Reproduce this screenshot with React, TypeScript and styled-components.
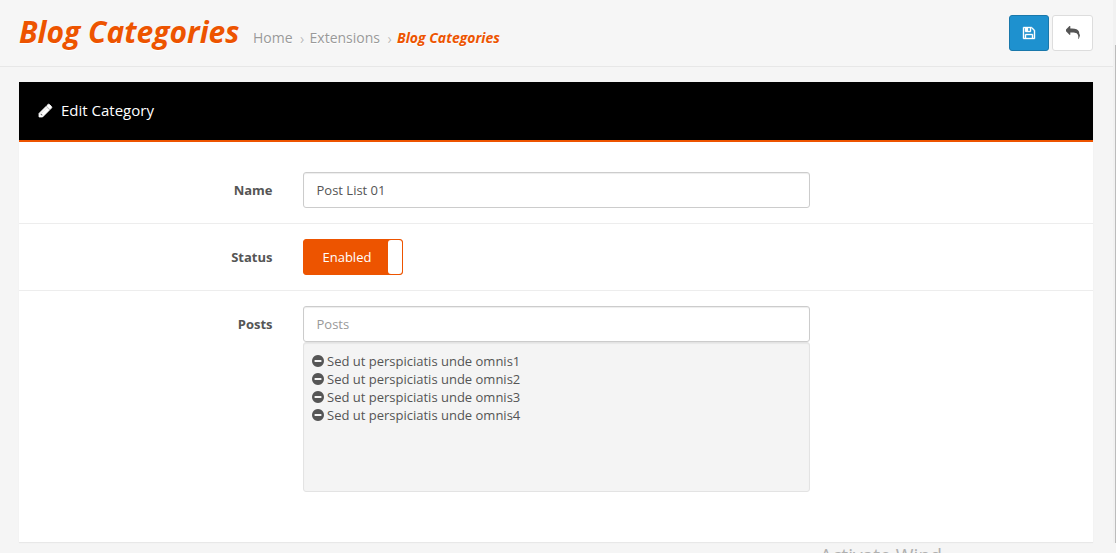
import React from "react";
import styled, { createGlobalStyle, css } from "styled-components";

const ORANGE = "#ed5400";

const GlobalStyle = createGlobalStyle`
  *, *::before, *::after { box-sizing: border-box; }
  html, body { margin: 0; height: 553px; overflow: hidden; }
  body {
    background: #f5f5f5;
    color: #555;
    font: 13px/18px "Open Sans", sans-serif;
  }
`;

const Page = styled.div`
  position: relative;
  height: 553px;
  overflow: hidden;
`;

const Header = styled.header`
  display: flex;
  align-items: flex-start;
  width: 1113px;
  height: 67px;
  padding: 0 20px 0 19px;
  border-bottom: 1px solid #e7e7e7;
  background: #f6f6f6;
`;

const Title = styled.h1`
  margin: 11px 14px 0 0;
  width: 220px;
  font-size: 30px;
  line-height: 41px;
  font-weight: 700;
  font-style: italic;
  white-space: nowrap;
  color: ${ORANGE};
  text-shadow: 0 1px #fff;
`;

const Breadcrumb = styled.nav`
  display: flex;
  flex: 1;
  margin-top: 28px;
  font-size: 14px;
  line-height: 20px;
  color: #999;
  text-shadow: 0 1px #fff;
  white-space: nowrap;
`;

const Crumb = styled.span<{ $current?: boolean }>`
  ${(p) =>
    p.$current &&
    css`
      color: ${ORANGE};
      font-weight: 700;
      font-style: italic;
    `}
`;

const Separator = styled.span`
  width: 17px;
  padding: 1px 0 0 7.5px;
  color: #bbb;
`;

const Actions = styled.div`
  display: flex;
  gap: 3px;
  margin-top: 15px;
`;

const IconButton = styled.button<{ $primary?: boolean }>`
  display: flex;
  align-items: center;
  justify-content: center;
  width: ${(p) => (p.$primary ? 40 : 41)}px;
  height: 36px;
  padding: 0;
  border: 1px solid ${(p) => (p.$primary ? "#1978ab" : "#ddd")};
  border-radius: 3px;
  background: ${(p) => (p.$primary ? "#1e91cf" : "#fff")};
  color: ${(p) => (p.$primary ? "#fff" : "#555")};
`;

const Panel = styled.section`
  width: 1074px;
  height: 460px;
  margin: 15px 0 0 19px;
  background: #fff;
  box-shadow: 0 1px 1px rgba(0, 0, 0, 0.05);
`;

const PanelHeading = styled.h2`
  display: flex;
  align-items: center;
  gap: 8px;
  height: 60px;
  margin: 0 0 15px;
  padding: 0 19px 2px;
  border-bottom: 2px solid ${ORANGE};
  background: #000;
  color: #fff;
  font-size: 15px;
  font-weight: 400;
`;

const FormRow = styled.div`
  display: flex;
  padding: 15px 0;
  & + & { border-top: 1px solid #ededed; }
`;

const Label = styled.label`
  width: 253.5px;
  margin-right: 30.5px;
  padding-top: 9px;
  text-align: right;
  font-weight: 700;
`;

const Field = styled.div`
  width: 507px;
`;

const TextInput = styled.input`
  display: block;
  width: 100%;
  height: 36px;
  padding: 8px 12.5px;
  border: 1px solid #ccc;
  border-radius: 3px;
  background: #fff;
  box-shadow: inset 0 1px 1px rgba(0, 0, 0, 0.075);
  color: #555;
  font: inherit;
  outline: none;
  &::placeholder { color: #999; opacity: 1; }
`;

const Toggle = styled.button`
  display: flex;
  justify-content: space-between;
  width: 100px;
  height: 36px;
  padding: 0;
  border: 1px solid ${ORANGE};
  border-radius: 3px;
  background: ${ORANGE};
  color: #fff;
  font: inherit;
`;

const ToggleText = styled.span`
  padding: 8px 0 0 18.5px;
`;

const ToggleHandle = styled.span`
  width: 14px;
  height: 34px;
  border-radius: 3px;
  background: #fff;
`;

const Well = styled.ul`
  height: 150px;
  margin: 0;
  padding: 9px 7px;
  border: 1px solid #e3e3e3;
  border-radius: 3px;
  background: #f4f4f4;
  box-shadow: inset 0 1px 1px rgba(0, 0, 0, 0.05);
  list-style: none;
`;

const PostItem = styled.li`
  display: flex;
  align-items: center;
  gap: 2px;
  height: 18px;
`;

const ScrollTrack = styled.div`
  position: absolute;
  top: 0;
  right: 0;
  width: 3px;
  height: 543px;
  background: #f1f1f1;
`;

const ScrollThumb = styled.div`
  width: 1px;
  height: 498px;
  margin: 45px 0 0 2px;
  background: #bcbcbc;
`;

const SystemNotice = styled.div`
  position: absolute;
  left: 820px;
  top: 544px;
  color: #b0b0b0;
  font-size: 19.2px;
  line-height: 24px;
  white-space: nowrap;
`;

const ICONS = {
  pencil:
    "M491 1536l91-91-235-235-91 91v107h128v128h107zm523-928q0-22-22-22-10 0-17 7l-542 542q-7 7-7 17 0 22 22 22 10 0 17-7l542-542q7-7 7-17zm-54-192l416 416-832 832h-416v-416zm683 96q0 53-37 90l-166 166-416-416 166-165q36-38 90-38 53 0 91 38l235 234q37 39 37 91z",
  save: "M512 1536h768v-384h-768v384zm896 0h128v-896q0-14-10-38.5t-20-34.5l-281-281q-10-10-34-20t-39-10v416q0 40-28 68t-68 28h-576q-40 0-68-28t-28-68v-416h-128v1280h128v-416q0-40 28-68t68-28h832q40 0 68 28t28 68v416zm-384-928v-320q0-13-9.5-22.5t-22.5-9.5h-192q-13 0-22.5 9.5t-9.5 22.5v320q0 13 9.5 22.5t22.5 9.5h192q13 0 22.5-9.5t9.5-22.5zm640 32v928q0 40-28 68t-68 28h-1344q-40 0-68-28t-28-68v-1344q0-40 28-68t68-28h928q40 0 88 20t76 48l280 280q28 28 48 76t20 88z",
  reply:
    "M1792 1120q0 166-127 451-3 7-10.5 24t-13.5 30-13 22q-12 17-28 17-15 0-23.5-10t-8.5-25q0-9 2.5-26.5t2.5-23.5q5-68 5-123 0-112-19.5-200.5t-54-153.5-89-112-117-81-149-49.5-172.5-24-201-7.5h-224v256q0 26-19 45t-45 19-45-19l-512-512q-19-19-19-45t19-45l512-512q19-19 45-19t45 19 19 45v256h224q713 0 875 403 53 134 53 333z",
  minus:
    "M1344 960v-128q0-26-19-45t-45-19h-768q-26 0-45 19t-19 45v128q0 26 19 45t45 19h768q26 0 45-19t19-45zm320-64q0 209-103 385.5t-279.5 279.5-385.5 103-385.5-103-279.5-279.5-103-385.5 103-385.5 279.5-279.5 385.5-103 385.5 103 279.5 279.5 103 385.5z",
};

const Icon = ({ name, size, weight = 0 }: { name: keyof typeof ICONS; size: number; weight?: number }) => (
  <svg
    width={size}
    height={size}
    viewBox="0 0 1792 1792"
    fill="currentColor"
    stroke="currentColor"
    strokeWidth={weight}
    aria-hidden
  >
    <path d={ICONS[name]} />
  </svg>
);

const POSTS = [1, 2, 3, 4].map((n) => `Sed ut perspiciatis unde omnis${n}`);

export default function App() {
  return (
    <>
      <GlobalStyle />
      <Page>
        <Header>
          <Title>Blog Categories</Title>
          <Breadcrumb>
            <Crumb>Home</Crumb>
            <Separator>›</Separator>
            <Crumb>Extensions</Crumb>
            <Separator>›</Separator>
            <Crumb $current>Blog Categories</Crumb>
          </Breadcrumb>
          <Actions>
            <IconButton $primary aria-label="Save"><Icon name="save" size={14} weight={50} /></IconButton>
            <IconButton aria-label="Back"><Icon name="reply" size={14} /></IconButton>
          </Actions>
        </Header>
        <Panel>
          <PanelHeading>
            <Icon name="pencil" size={15} weight={110} />
            Edit Category
          </PanelHeading>
          <FormRow>
            <Label htmlFor="name">Name</Label>
            <Field><TextInput id="name" defaultValue="Post List 01" /></Field>
          </FormRow>
          <FormRow>
            <Label>Status</Label>
            <Field>
              <Toggle>
                <ToggleText>Enabled</ToggleText>
                <ToggleHandle />
              </Toggle>
            </Field>
          </FormRow>
          <FormRow>
            <Label htmlFor="posts">Posts</Label>
            <Field>
              <TextInput id="posts" placeholder="Posts" />
              <Well>
                {POSTS.map((post) => (
                  <PostItem key={post}>
                    <Icon name="minus" size={14} />
                    {post}
                  </PostItem>
                ))}
              </Well>
            </Field>
          </FormRow>
        </Panel>
        <ScrollTrack><ScrollThumb /></ScrollTrack>
        <SystemNotice>Activate Wind</SystemNotice>
      </Page>
    </>
  );
}
